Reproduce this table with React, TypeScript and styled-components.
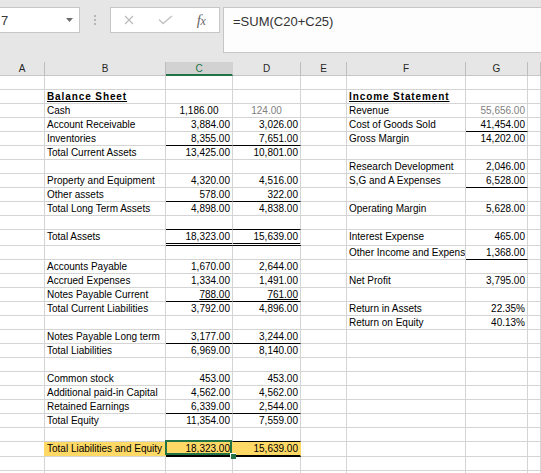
import React from 'react';
import styled, { createGlobalStyle } from 'styled-components';

const COLS = [45, 121, 67, 68, 46, 119, 62];
const TEMPLATE = COLS.map((w) => `${w}px`).join(' ') + ' 1fr';
const GRID = '#d4d4d4';
const YELLOW = '#ffd966';
const GREEN = '#217346';
const CELL_FONT = "'Liberation Sans', Arial, sans-serif";

type Bottom = 'grid' | 'black' | 'double' | 'thick';
type Spec = {
  t?: string;
  a?: 'l' | 'r' | 'c';
  gray?: boolean;
  title?: boolean;
  ul?: boolean;
  b?: Bottom;
  fill?: boolean;
  sel?: boolean;
  rc?: string;
};
type RowSpec = { h?: number; c: Partial<Record<number, Spec>> };

const L = (t: string, extra: Spec = {}): Spec => ({ t, a: 'l', ...extra });
const N = (t: string, extra: Spec = {}): Spec => ({ t, a: 'r', ...extra });
const blk: Spec = { b: 'black' };
const dbl: Spec = { b: 'double' };

const ROWS: RowSpec[] = [
  { c: {} },
  { c: { 1: L('Balance Sheet', { title: true }), 5: L('Income Statement', { title: true }) } },
  {
    c: {
      1: L('Cash'),
      2: { t: '1,186.00', a: 'c' },
      3: { t: '124.00', a: 'c', gray: true },
      5: L('Revenue'),
      6: N('55,656.00', { gray: true }),
    },
  },
  {
    c: {
      1: L('Account Receivable'),
      2: N('3,884.00'),
      3: N('3,026.00'),
      5: L('Cost of Goods Sold'),
      6: N('41,454.00', blk),
    },
  },
  {
    c: {
      1: L('Inventories'),
      2: N('8,355.00', blk),
      3: N('7,651.00', blk),
      5: L('Gross Margin'),
      6: N('14,202.00'),
    },
  },
  { c: { 1: L('Total Current Assets'), 2: N('13,425.00'), 3: N('10,801.00') } },
  { c: { 5: L('Research Development'), 6: N('2,046.00') } },
  {
    c: {
      1: L('Property and Equipment'),
      2: N('4,320.00'),
      3: N('4,516.00'),
      5: L('S,G and A Expenses'),
      6: N('6,528.00', blk),
    },
  },
  { c: { 1: L('Other assets'), 2: N('578.00', blk), 3: N('322.00', blk) } },
  {
    c: {
      1: L('Total Long Term Assets'),
      2: N('4,898.00'),
      3: N('4,838.00'),
      5: L('Operating Margin'),
      6: N('5,628.00'),
    },
  },
  { c: { 2: blk, 3: blk } },
  {
    h: 16,
    c: {
      1: L('Total Assets'),
      2: N('18,323.00', dbl),
      3: N('15,639.00', dbl),
      5: L('Interest Expense'),
      6: N('465.00'),
    },
  },
  { c: { 5: L('Other Income and Expens'), 6: N('1,368.00', blk) } },
  { c: { 1: L('Accounts Payable'), 2: N('1,670.00'), 3: N('2,644.00') } },
  {
    c: {
      1: L('Accrued Expenses'),
      2: N('1,334.00'),
      3: N('1,491.00'),
      5: L('Net Profit'),
      6: N('3,795.00'),
    },
  },
  {
    c: {
      1: L('Notes Payable Current'),
      2: N('788.00', { ul: true, b: 'black' }),
      3: N('761.00', { ul: true, b: 'black' }),
    },
  },
  {
    c: {
      1: L('Total Current Liabilities'),
      2: N('3,792.00'),
      3: N('4,896.00'),
      5: L('Return in Assets'),
      6: N('22.35%'),
    },
  },
  { c: { 5: L('Return on Equity'), 6: N('40.13%') } },
  { c: { 1: L('Notes Payable Long term'), 2: N('3,177.00', blk), 3: N('3,244.00', blk) } },
  { c: { 1: L('Total Liabilities'), 2: N('6,969.00'), 3: N('8,140.00') } },
  { c: {} },
  { c: { 1: L('Common stock'), 2: N('453.00'), 3: N('453.00') } },
  { c: { 1: L('Additional paid-in Capital'), 2: N('4,562.00'), 3: N('4,562.00') } },
  { c: { 1: L('Retained Earnings'), 2: N('6,339.00', blk), 3: N('2,544.00', blk) } },
  { c: { 1: L('Total Equity'), 2: N('11,354.00'), 3: N('7,559.00') } },
  { c: { 2: blk, 3: blk } },
  {
    h: 15,
    c: {
      0: { rc: YELLOW },
      1: L('Total Liabilities and Equity', { fill: true }),
      2: N('18,323.00', { fill: true, b: 'thick', sel: true }),
      3: N('15,639.00', { fill: true, b: 'thick' }),
    },
  },
  { c: {} },
  { c: {} },
];

const GlobalStyle = createGlobalStyle`
  html, body { margin: 0; padding: 0; background: #ffffff; overflow: hidden; }
  * { box-sizing: border-box; }
`;

const Frame = styled.div`
  width: 541px;
  height: 473px;
  overflow: hidden;
  display: flex;
  flex-direction: column;
  background: #ffffff;
`;

const TopBar = styled.div`
  flex: none;
  height: 62px;
  background: #e6e6e6;
  display: flex;
  align-items: flex-start;
  padding-top: 7px;
`;

const NameBox = styled.div`
  width: 80px;
  height: 26px;
  background: #ffffff;
  border: 1px solid #c6c6c6;
  border-left: none;
  display: flex;
  align-items: center;
  justify-content: space-between;
  padding: 0 6px 0 1px;
  font: 13px ${CELL_FONT};
  color: #3a3a3a;
`;

const Grip = styled.div`
  width: 30px;
  height: 26px;
  display: flex;
  flex-direction: column;
  align-items: center;
  justify-content: center;
  gap: 2px;
`;

const GripDot = styled.span`
  width: 2px;
  height: 2px;
  background: #b5b5b5;
`;

const ButtonBox = styled.div`
  width: 110px;
  height: 26px;
  background: #ffffff;
  border: 1px solid #c6c6c6;
  display: flex;
  align-items: center;
`;

const BarButton = styled.div`
  width: 36px;
  height: 100%;
  display: flex;
  align-items: center;
  justify-content: center;
`;

const Fx = styled.span`
  font: italic 15px 'Liberation Serif', 'Times New Roman', serif;
  color: #666666;
  letter-spacing: -0.5px;
  & small {
    font-size: 12px;
  }
`;

const FormulaBox = styled.div`
  flex: 1;
  margin-left: 3px;
  height: 46px;
  background: #fdfdfd;
  border: 1px solid #c6c6c6;
  border-right: none;
  padding: 5px 0 0 9px;
  font: 13px/17px ${CELL_FONT};
  color: #333333;
`;

const HeaderRow = styled.div`
  flex: none;
  display: grid;
  grid-template-columns: ${TEMPLATE};
  height: 14px;
  background: #e6e6e6;
`;

const HeaderCell = styled.div<{ $active?: boolean }>`
  display: flex;
  align-items: center;
  justify-content: center;
  font: 10px ${CELL_FONT};
  color: ${(p) => (p.$active ? GREEN : '#262626')};
  background: ${(p) => (p.$active ? '#d2d2d2' : 'transparent')};
  border-right: 1px solid ${(p) => (p.$active ? '#d2d2d2' : '#bdbdbd')};
  border-bottom: ${(p) => (p.$active ? `2px solid ${GREEN}` : '1px solid #c6c6c6')};
`;

const Sheet = styled.div`
  flex: none;
  display: flex;
  flex-direction: column;
`;

const SheetRow = styled.div<{ $h: number }>`
  flex: none;
  display: grid;
  grid-template-columns: ${TEMPLATE};
  height: ${(p) => p.$h}px;
`;

const bottomBorder = (b?: Bottom) => {
  switch (b) {
    case 'black':
      return '1px solid #000000';
    case 'double':
      return '3px double #000000';
    case 'thick':
      return '2px solid #000000';
    default:
      return `1px solid ${GRID}`;
  }
};

const Cell = styled.div<{ $b?: Bottom; $fill?: boolean; $rc?: string }>`
  position: relative;
  min-width: 0;
  background: ${(p) => (p.$fill ? YELLOW : '#ffffff')};
  border-right: 1px solid ${(p) => p.$rc ?? (p.$fill ? YELLOW : GRID)};
  border-bottom: ${(p) => bottomBorder(p.$b)};
`;

const CellText = styled.div<{ $a?: 'l' | 'r' | 'c'; $gray?: boolean; $title?: boolean; $ul?: boolean }>`
  overflow: hidden;
  white-space: nowrap;
  padding: ${(p) => (p.$a === 'l' ? '0 0 0 2px' : '0 2px')};
  font: ${(p) => (p.$title ? 'bold' : 'normal')} 10px/13px ${CELL_FONT};
  letter-spacing: ${(p) => (p.$title ? '0.9px' : 'normal')};
  color: ${(p) => (p.$gray ? '#808080' : '#000000')};
  text-align: ${(p) => (p.$a === 'r' ? 'right' : p.$a === 'c' ? 'center' : 'left')};
  text-decoration: ${(p) => (p.$title || p.$ul ? 'underline' : 'none')};
`;

const Selection = styled.div`
  position: absolute;
  left: -1px;
  top: -2px;
  width: 67px;
  height: 15px;
  border: 2px solid ${GREEN};
  z-index: 2;
  pointer-events: none;
`;

const FillHandle = styled.span`
  position: absolute;
  left: 63px;
  top: 11px;
  width: 6px;
  height: 6px;
  background: ${GREEN};
  border-left: 1px solid #ffffff;
  border-top: 1px solid #ffffff;
`;

const HEADERS = ['A', 'B', 'C', 'D', 'E', 'F', 'G', ''];

const CancelIcon = () => (
  <svg width="10" height="10" viewBox="0 0 10 10">
    <path d="M1 1 L9 9 M9 1 L1 9" stroke="#bcbcbc" strokeWidth="1.2" fill="none" />
  </svg>
);

const EnterIcon = () => (
  <svg width="15" height="10" viewBox="0 0 15 10">
    <polyline points="1,4.5 5,8.5 14,1" stroke="#c4c4c4" strokeWidth="1.6" fill="none" />
  </svg>
);

const DropArrow = () => (
  <svg width="7" height="4" viewBox="0 0 7 4">
    <polygon points="0,0 7,0 3.5,4" fill="#6d6d6d" />
  </svg>
);

export default function App() {
  return (
    <Frame>
      <GlobalStyle />
      <TopBar>
        <NameBox>
          <span>7</span>
          <DropArrow />
        </NameBox>
        <Grip>
          <GripDot />
          <GripDot />
          <GripDot />
        </Grip>
        <ButtonBox>
          <BarButton>
            <CancelIcon />
          </BarButton>
          <BarButton>
            <EnterIcon />
          </BarButton>
          <BarButton>
            <Fx>
              f<small>x</small>
            </Fx>
          </BarButton>
        </ButtonBox>
        <FormulaBox>=SUM(C20+C25)</FormulaBox>
      </TopBar>
      <HeaderRow>
        {HEADERS.map((h, i) => (
          <HeaderCell key={i} $active={h === 'C'}>
            {h}
          </HeaderCell>
        ))}
      </HeaderRow>
      <Sheet>
        {ROWS.map((row, r) => (
          <SheetRow key={r} $h={row.h ?? 14}>
            {HEADERS.map((_, c) => {
              const s = row.c[c] ?? {};
              return (
                <Cell key={c} $b={s.b} $fill={s.fill} $rc={s.rc}>
                  {s.t && (
                    <CellText $a={s.a} $gray={s.gray} $title={s.title} $ul={s.ul}>
                      {s.t}
                    </CellText>
                  )}
                  {s.sel && (
                    <Selection>
                      <FillHandle />
                    </Selection>
                  )}
                </Cell>
              );
            })}
          </SheetRow>
        ))}
      </Sheet>
    </Frame>
  );
}
